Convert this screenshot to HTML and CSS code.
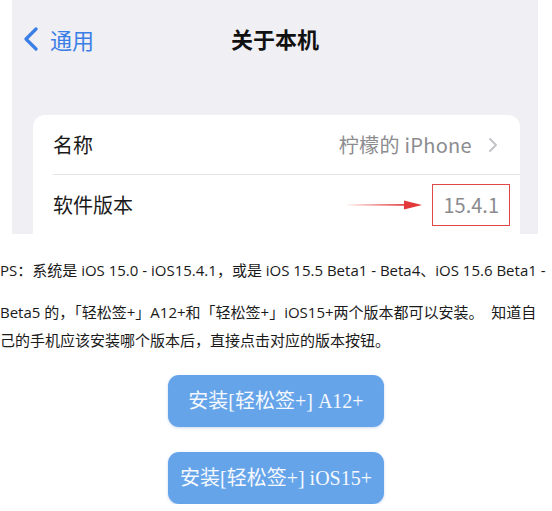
FILE: index.html
```html
<!DOCTYPE html>
<html lang="zh-CN">
<head>
    <meta charset="UTF-8">
    <meta name="viewport" content="width=device-width, initial-scale=1.0">
    <title>轻松签+ 安装说明</title>
    <link rel="stylesheet" href="styles.css">
</head>
<body>

    <!-- Captura de "关于本机" -->
    <div class="captura">
        <div class="barra">
            <a class="volver" href="#">
                <svg class="chevron" width="16" height="24" viewBox="0 0 16 24">
                    <path d="M13 2 L3 12 L13 22" fill="none" stroke="#3a7fe6" stroke-width="3.2" stroke-linecap="round" stroke-linejoin="round"/>
                </svg>
                <span>通用</span>
            </a>
            <div class="titulo">关于本机</div>
        </div>

        <div class="tarjeta">
            <div class="fila">
                <span class="etiqueta">名称</span>
                <span class="valor">柠檬的 iPhone
                    <svg class="flecha" width="10" height="16" viewBox="0 0 10 16">
                        <path d="M2 2 L8 8 L2 14" fill="none" stroke="#c4c4c8" stroke-width="2" stroke-linecap="round" stroke-linejoin="round"/>
                    </svg>
                </span>
            </div>
            <div class="fila fila-version">
                <span class="etiqueta">软件版本</span>
                <svg class="marca" width="80" height="10" viewBox="0 0 80 10">
                    <path d="M0 5 L64 4 L64 5.8 Z" fill="#e23a3a"/>
                    <path d="M60 0.5 L78 5 L60 9.5 Z" fill="#e23a3a"/>
                </svg>
                <span class="version">15.4.1</span>
            </div>
            <div class="fila"></div>
        </div>
    </div>

    <div class="nota">
        <p class="primera">PS：系统是 iOS 15.0 - iOS15.4.1，或是 iOS 15.5 Beta1 - Beta4、iOS 15.6 Beta1 -</p>
        <p>Beta5 的，「轻松签+」A12+和「轻松签+」iOS15+两个版本都可以安装。&nbsp; 知道自</p>
        <p>己的手机应该安装哪个版本后，直接点击对应的版本按钮。</p>
    </div>

    <div class="botones">
        <a class="boton" href="#">安装[轻松签+] A12+</a>
        <a class="boton" href="#">安装[轻松签+] iOS15+</a>
    </div>

</body>
</html>
```

FILE: styles.css
```css
* {
    margin: 0;
    padding: 0;
    box-sizing: border-box;
}

body {
    margin: 0;
    background-color: #ffffff;
    font-family: 'Noto Sans CJK SC', sans-serif;
    color: #222;
}

/* Captura del telefono */
.captura {
    margin: 0 14px 0 12px;
    height: 234px;
    background-color: #efeff4;
    overflow: hidden;
}

.barra {
    position: relative;
    height: 115px;
}

.volver {
    display: flex;
    align-items: center;
    gap: 11px;
    padding: 26px 0 0 11px;
    color: #3a7fe6;
    text-decoration: none;
    font-size: 22px;
    line-height: 26px;
}

.titulo {
    position: absolute;
    top: 25px;
    left: 0;
    right: 0;
    text-align: center;
    font-size: 22px;
    line-height: 26px;
    font-weight: bold;
    color: #111;
}

.tarjeta {
    margin: 0 18px 0 21px;
    background-color: #ffffff;
    border-radius: 12px 12px 0 0;
    padding-left: 20px;
}

.fila {
    display: flex;
    align-items: center;
    height: 60px;
    border-bottom: 1px solid #e4e4e8;
    padding-right: 22px;
}

.fila-version {
    padding-right: 10px;
}

.etiqueta {
    font-size: 20px;
    color: #1a1a1a;
}

.valor {
    margin-left: auto;
    display: flex;
    align-items: center;
    gap: 16px;
    font-size: 20px;
    letter-spacing: 0.3px;
    color: #8c8c90;
}

.marca {
    margin-left: auto;
    margin-right: 8px;
}

.version {
    font-size: 20px;
    color: #8c8c90;
    border: 1.5px solid #e04848;
    padding: 6px 10px;
    line-height: 28px;
}

/* Texto explicativo */
.nota {
    font-family: 'Open Sans', 'Noto Sans CJK SC', sans-serif;
    font-size: 15px;
    color: #1a1a1a;
    padding-top: 22px;
    white-space: nowrap;
}

.nota p {
    line-height: 28px;
}

.nota .primera {
    margin-bottom: 14px;
}

.botones {
    display: flex;
    flex-direction: column;
    align-items: center;
    gap: 25px;
    margin-top: 21px;
}

.boton {
    display: block;
    width: 216px;
    height: 52px;
    line-height: 52px;
    text-align: center;
    background-color: #66a4ea;
    color: #f5f9fe;
    border-radius: 11px;
    text-decoration: none;
    font-family: 'Liberation Serif', 'Noto Sans CJK SC', serif;
    font-size: 20px;
    box-shadow: 0 1px 3px rgba(80, 130, 200, 0.3);
}
```
